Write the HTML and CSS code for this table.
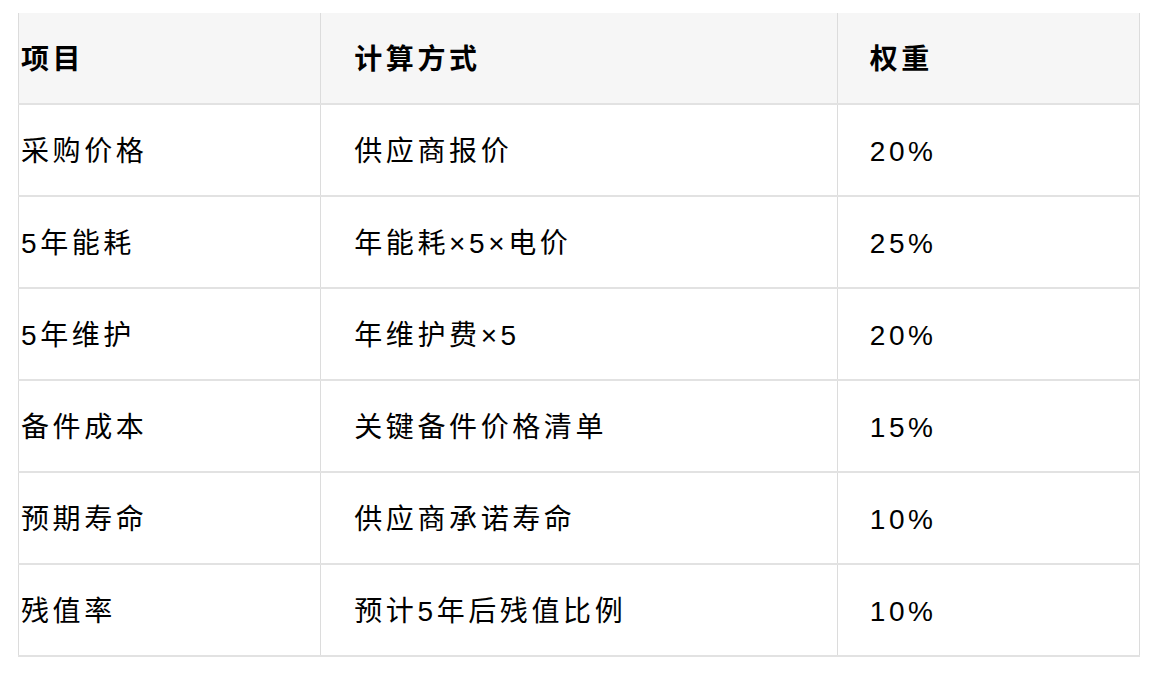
FILE: index.html
```html
<!DOCTYPE html>
<html lang="zh-CN">
<head>
<meta charset="utf-8">
<title>TCO</title>
<link rel="stylesheet" href="styles.css">
</head>
<body>
<div class="wrap">
<table class="tco">
<thead>
<tr><th class="c1">项目</th><th class="c2">计算方式</th><th class="c3">权重</th></tr>
</thead>
<tbody>
<tr><td class="c1">采购价格</td><td class="c2">供应商报价</td><td class="c3">20%</td></tr>
<tr><td class="c1">5年能耗</td><td class="c2">年能耗×5×电价</td><td class="c3">25%</td></tr>
<tr><td class="c1">5年维护</td><td class="c2">年维护费×5</td><td class="c3">20%</td></tr>
<tr><td class="c1">备件成本</td><td class="c2">关键备件价格清单</td><td class="c3">15%</td></tr>
<tr><td class="c1">预期寿命</td><td class="c2">供应商承诺寿命</td><td class="c3">10%</td></tr>
<tr><td class="c1">残值率</td><td class="c2">预计5年后残值比例</td><td class="c3">10%</td></tr>
</tbody>
</table>
</div>
</body>
</html>
```
FILE: styles.css
```css
html, body {
  margin: 0;
  padding: 0;
  background: #ffffff;
}
.wrap {
  padding: 13px 0 0 18px;
}
.tco {
  border-collapse: collapse;
  width: 1122px;
  table-layout: fixed;
  font-family: "Liberation Sans", "Noto Sans CJK SC", sans-serif;
  font-size: 28px;
  letter-spacing: 3.6px;
  color: #000000;
  border-left: 1px solid #dcdcdc;
  border-right: 1px solid #dcdcdc;
}
.tco th, .tco td {
  box-sizing: border-box;
  text-align: left;
  vertical-align: middle;
  border-bottom: 2px solid #e2e2e2;
  border-right: 1px solid #dcdcdc;
  padding: 3px 0 0 0;
  line-height: 1;
}
.tco th {
  background: #f6f6f6;
  font-weight: 700;
  height: 91px;
}
.tco td {
  font-weight: 400;
  height: 92px;
}
.c1 { width: 302px; padding-left: 2px !important; }
.c2 { width: 516px; padding-left: 33px !important; }
.c3 { width: 302px; padding-left: 32px !important; }
```
